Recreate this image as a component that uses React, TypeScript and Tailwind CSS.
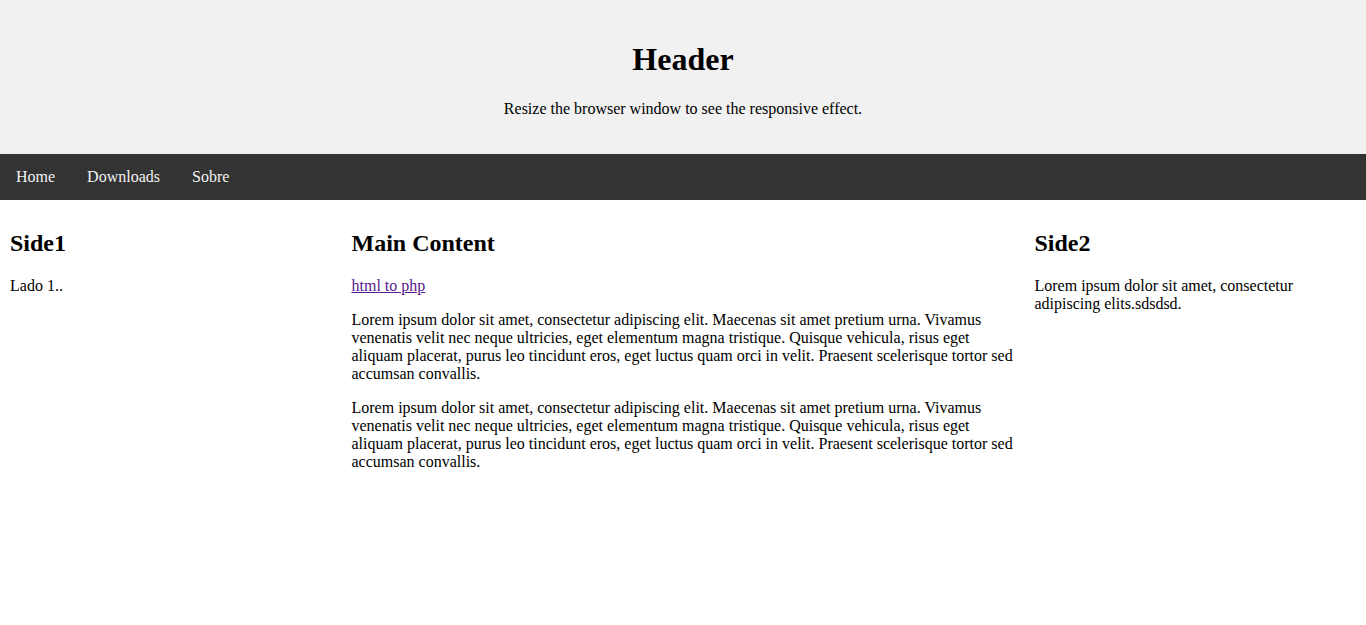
export default function App() {
  const lorem =
    "Lorem ipsum dolor sit amet, consectetur adipiscing elit. Maecenas sit amet pretium urna. Vivamus venenatis velit nec neque ultricies, eget elementum magna tristique. Quisque vehicula, risus eget aliquam placerat, purus leo tincidunt eros, eget luctus quam orci in velit. Praesent scelerisque tortor sed accumsan convallis.";

  return (
    <div className="font-['Liberation_Serif','Times_New_Roman',serif] text-[16px] leading-[normal] text-black bg-white min-h-[625px]">
      {/* header */}
      <div className="bg-[#f1f1f1] p-5 text-center">
        <h1 className="text-[32px] font-bold my-[21.44px]">Header</h1>
        <p className="my-4">Resize the browser window to see the responsive effect.</p>
      </div>

      {/* nav */}
      <div className="bg-[#333] flex">
        <a href="#" className="block px-4 py-[14px] text-[#f2f2f2] no-underline">Home</a>
        <a href="#" className="block px-4 py-[14px] text-[#f2f2f2] no-underline">Downloads</a>
        <a href="#" className="block px-4 py-[14px] text-[#f2f2f2] no-underline">Sobre</a>
      </div>

      <div className="flex">
        <div className="w-1/4 p-[10px]">
          <h2 className="text-[24px] font-bold my-[19.92px]">Side1</h2>
          <p className="my-4">Lado 1..</p>
        </div>

        <div className="w-1/2 p-[10px]">
          <h2 className="text-[24px] font-bold my-[19.92px]">Main Content</h2>
          <p className="my-4">
            <a href="#" className="text-[#551a8b] underline">html to php</a>
          </p>
          <p className="my-4">{lorem}</p>
          <p className="my-4">{lorem}</p>
        </div>

        <div className="w-1/4 p-[10px]">
          <h2 className="text-[24px] font-bold my-[19.92px]">Side2</h2>
          <p className="my-4">Lorem ipsum dolor sit amet, consectetur adipiscing elits.sdsdsd.</p>
        </div>
      </div>
    </div>
  );
}
